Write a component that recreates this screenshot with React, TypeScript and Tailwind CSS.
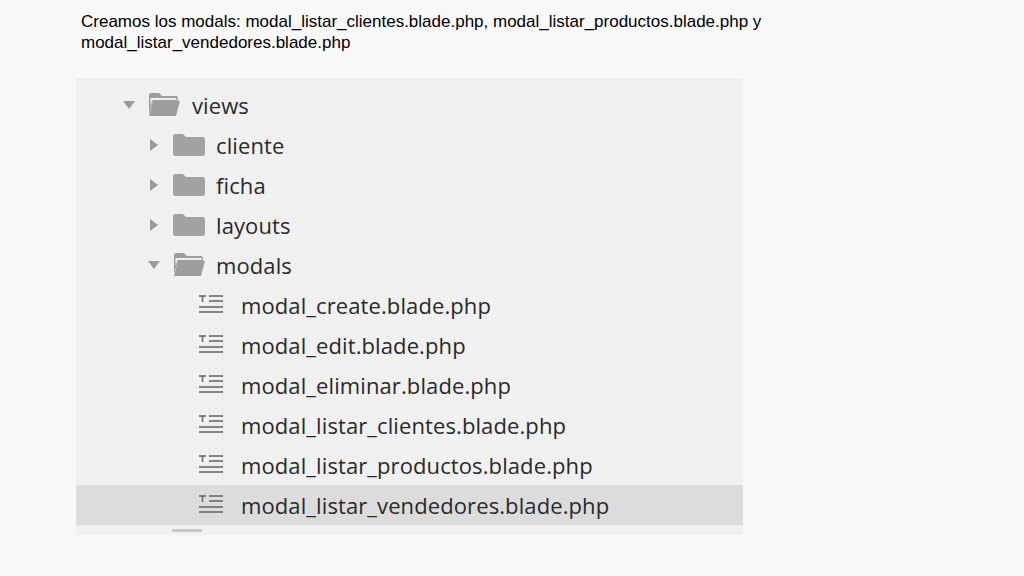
import React from "react";

const Tri = ({ open }: { open: boolean }) => (
  <svg width="14" height="14" viewBox="0 0 14 14" className="shrink-0">
    {open ? <polygon points="1,3 13,3 7,11" fill="#9a9a9a" /> : <polygon points="3,1 11,7 3,13" fill="#9a9a9a" />}
  </svg>
);
const Folder = ({ open }: { open: boolean }) => (
  <svg width="34" height="26" viewBox="0 0 34 26" className="shrink-0">
    {open ? (
      <>
        <path d="M2 3 Q2 1 4 1 H12 L15 4 H29 Q31 4 31 6 V9 H6 L2 22 Z" fill="#9d9d9d" />
        <path d="M6 9 H33 L29 24 H2 Z" fill="#9d9d9d" />
        <path d="M3.5 6 H29.5 V8 H5.5 L3.5 14 Z" fill="#f0f0f0" />
      </>
    ) : (
      <path d="M1 4 Q1 2 3 2 H11 L14 5 H31 Q33 5 33 7 V22 Q33 24 31 24 H3 Q1 24 1 22 Z" fill="#a2a2a2" />
    )}
  </svg>
);
const FileIcon = () => (
  <svg width="26" height="22" viewBox="0 0 26 22" className="shrink-0">
    <g stroke="#6a6a6a" strokeWidth="1.6">
      <line x1="1" y1="2" x2="8" y2="2" />
      <line x1="4.5" y1="2" x2="4.5" y2="8" />
      <line x1="11" y1="2" x2="25" y2="2" />
      <line x1="11" y1="7" x2="25" y2="7" />
      <line x1="1" y1="13" x2="25" y2="13" />
      <line x1="1" y1="18" x2="25" y2="18" />
    </g>
  </svg>
);

const folders = [
  { name: "cliente", open: false },
  { name: "ficha", open: false },
  { name: "layouts", open: false },
  { name: "modals", open: true },
];
const files = [
  "modal_create.blade.php",
  "modal_edit.blade.php",
  "modal_eliminar.blade.php",
  "modal_listar_clientes.blade.php",
  "modal_listar_productos.blade.php",
  "modal_listar_vendedores.blade.php",
];

export default function App() {
  return (
    <div className="w-[1024px] h-[576px] bg-[#f8f8f8] overflow-hidden relative" style={{ fontFamily: "'Liberation Sans', Arial, sans-serif" }}>
      <div className="pl-[81px] pt-[11px] text-[17px] leading-[21px] text-black">
        Creamos los modals: modal_listar_clientes.blade.php, modal_listar_productos.blade.php y<br />modal_listar_vendedores.blade.php
      </div>
      <div className="ml-[76px] mt-[25px] w-[667px] h-[457px] bg-[#f0f0f0] pt-[7px] overflow-hidden text-[22px] text-[#2a2a2a] tracking-[0.1px]" style={{ fontFamily: "'Open Sans', 'Noto Sans', sans-serif" }}>
        <div className="h-[40px] flex items-center pl-[46px]">
          <Tri open />
          <div className="ml-[11px]"><Folder open /></div>
          <span className="ml-[11px]">views</span>
        </div>
        {folders.map((f) => (
          <div key={f.name} className="h-[40px] flex items-center pl-[71px]">
            <Tri open={f.open} />
            <div className="ml-[11px]"><Folder open={f.open} /></div>
            <span className="ml-[10px]">{f.name}</span>
          </div>
        ))}
        {files.map((n, i) => (
          <div key={n} className={`h-[40px] flex items-center pl-[122px] ${i === files.length - 1 ? "bg-[#dcdcdc]" : ""}`}>
            <FileIcon />
            <span className="ml-[17px]">{n}</span>
          </div>
        ))}
        <div className="h-[40px] flex items-start pl-[96px] pt-[4px]">
          <div className="w-[30px] h-[3px] bg-[#c8c8c8]" />
        </div>
      </div>
    </div>
  );
}
